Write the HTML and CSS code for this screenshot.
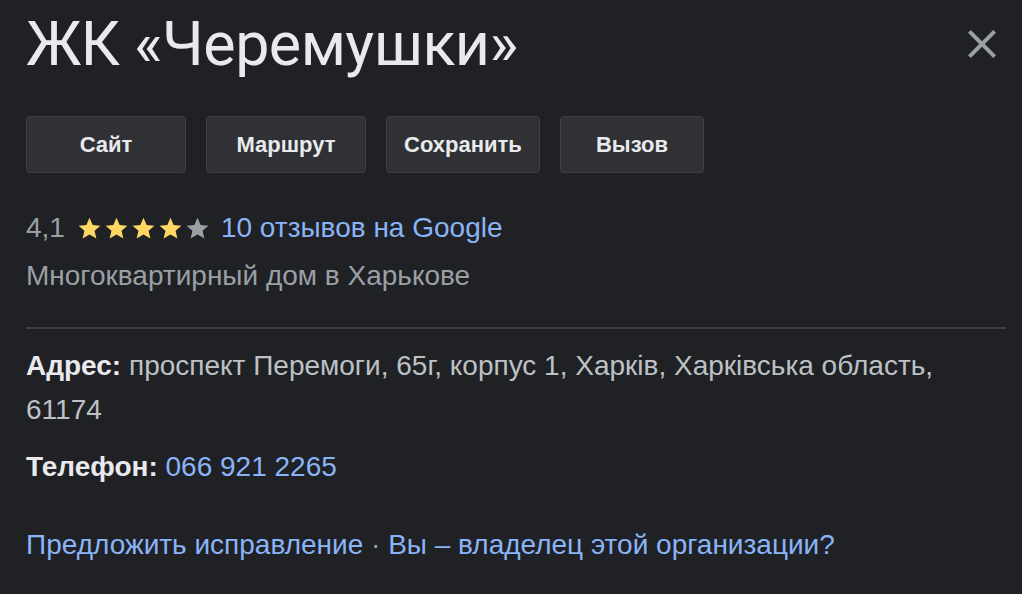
FILE: index.html
```html
<!DOCTYPE html>
<html lang="ru">
<head>
<meta charset="utf-8">
<link rel="stylesheet" href="styles.css">
</head>
<body>
<div class="panel">
  <div class="header">
    <h1 class="title">ЖК «Черемушки»</h1>
    <button class="close" aria-label="Закрыть">
      <svg width="48" height="48" viewBox="0 0 24 24"><path d="M19 6.41 17.59 5 12 10.59 6.41 5 5 6.41 10.59 12 5 17.59 6.41 19 12 13.41 17.59 19 19 17.59 13.41 12z" fill="#9aa0a6"/></svg>
    </button>
  </div>
  <div class="actions">
    <a class="btn b1">Сайт</a>
    <a class="btn b2">Маршрут</a>
    <a class="btn b3">Сохранить</a>
    <a class="btn b4">Вызов</a>
  </div>
  <div class="rating">
    <span class="score">4,1</span>
    <span class="stars">
      <svg viewBox="0 0 24 24"><path class="on" d="M12 2.5l2.8 6.4 6.9.6-5.2 4.6 1.6 6.8L12 17.3l-6.1 3.6 1.6-6.8-5.2-4.6 6.9-.6z"/></svg>
      <svg viewBox="0 0 24 24"><path class="on" d="M12 2.5l2.8 6.4 6.9.6-5.2 4.6 1.6 6.8L12 17.3l-6.1 3.6 1.6-6.8-5.2-4.6 6.9-.6z"/></svg>
      <svg viewBox="0 0 24 24"><path class="on" d="M12 2.5l2.8 6.4 6.9.6-5.2 4.6 1.6 6.8L12 17.3l-6.1 3.6 1.6-6.8-5.2-4.6 6.9-.6z"/></svg>
      <svg viewBox="0 0 24 24"><path class="on" d="M12 2.5l2.8 6.4 6.9.6-5.2 4.6 1.6 6.8L12 17.3l-6.1 3.6 1.6-6.8-5.2-4.6 6.9-.6z"/></svg>
      <svg viewBox="0 0 24 24"><path class="off" d="M12 2.5l2.8 6.4 6.9.6-5.2 4.6 1.6 6.8L12 17.3l-6.1 3.6 1.6-6.8-5.2-4.6 6.9-.6z"/></svg>
    </span>
    <a class="link">10 отзывов на Google</a>
  </div>
  <div class="category">Многоквартирный дом в Харькове</div>
  <hr class="divider">
  <div class="info">
    <p class="row"><b class="label">Адрес:</b> проспект Перемоги, 65г, корпус 1, Харків, Харківська область, 61174</p>
    <p class="row"><b class="label">Телефон:</b> <a class="link">066 921 2265</a></p>
  </div>
  <div class="footer"><a class="link">Предложить исправление</a> · <a class="link">Вы – владелец этой организации?</a></div>
</div>
</body>
</html>
```
FILE: styles.css
```css
html, body {
  margin: 0;
  padding: 0;
  background: #202124;
}
body {
  font-family: "Liberation Sans", Arial, sans-serif;
  color: #bdc1c6;
  width: 1022px;
  height: 594px;
  overflow: hidden;
}
.panel {
  padding: 0 16px 0 26px;
}
.header {
  display: flex;
  justify-content: space-between;
  align-items: flex-start;
  height: 116px;
}
.title {
  margin: 0;
  padding-top: 8px;
  font-family: Roboto, "Open Sans", sans-serif;
  font-weight: 400;
  font-size: 61px;
  line-height: 72px;
  color: #e8eaed;
  letter-spacing: -0.55px;
}
.close {
  background: none;
  border: 0;
  padding: 0;
  margin-top: 20px;
  margin-right: 0;
  width: 48px;
  height: 48px;
  cursor: pointer;
}
.close svg { display: block; }
.actions {
  display: flex;
  gap: 20px;
}
.btn {
  box-sizing: border-box;
  height: 57px;
  border: 1px solid #3c4043;
  background: #303134;
  border-radius: 4px;
  display: flex;
  align-items: center;
  justify-content: center;
  font-weight: 700;
  font-size: 22px;
  color: #e8eaed;
}
.b1 { width: 160px; }
.b2 { width: 160px; }
.b3 { width: 154px; }
.b4 { width: 144px; }
.rating {
  display: flex;
  align-items: center;
  margin-top: 37px;
  font-size: 28px;
  line-height: 36px;
}
.score { color: #9aa0a6; }
.stars {
  display: flex;
  margin: 0 10px 0 11px;
}
.stars svg { width: 27px; height: 27px; display: block; }
.stars .on { fill: #fdd663; }
.stars .off { fill: #9aa0a6; }
.link { color: #8ab4f8; text-decoration: none; }
.category {
  font-size: 28px;
  line-height: 36px;
  color: #9aa0a6;
  margin-top: 12px;
}
.divider {
  border: 0;
  border-top: 2px solid #3c4043;
  margin: 33px 0 0 0;
}
.info {
  margin-top: 15px;
  font-size: 28px;
  line-height: 44px;
}
.row {
  margin: 0;
  max-width: 960px;
  color: #bdc1c6;
}
.row + .row { margin-top: 13px; }
.label { font-weight: 700; color: #e8eaed; }
.footer {
  margin-top: 34px;
  font-size: 28px;
  line-height: 44px;
  color: #9aa0a6;
}
```
